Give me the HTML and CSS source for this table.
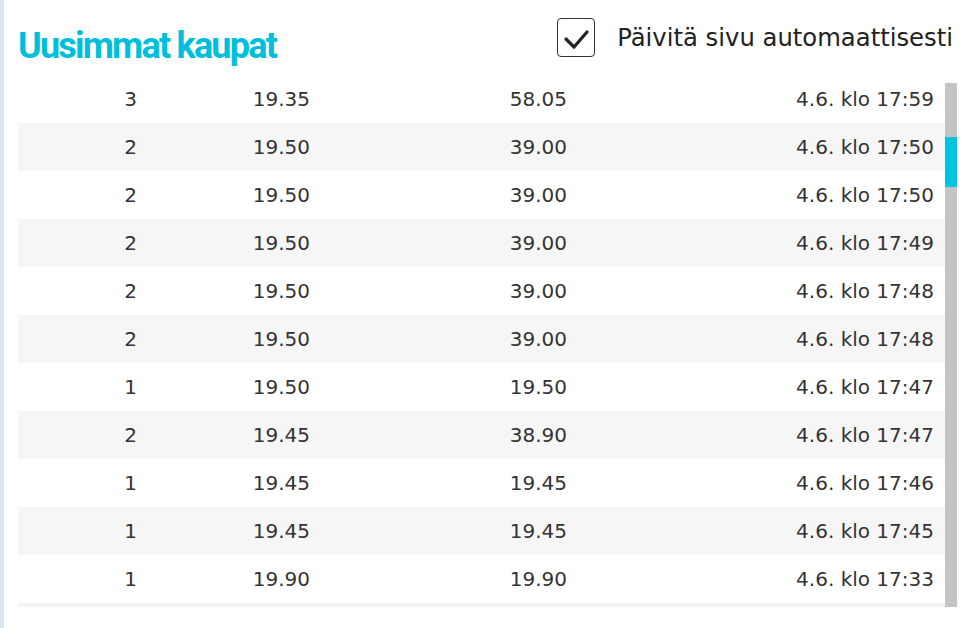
FILE: index.html
```html
<!DOCTYPE html>
<html lang="fi">
<head>
<meta charset="utf-8">
<title>Uusimmat kaupat</title>
<link rel="stylesheet" href="styles.css">
</head>
<body>
<div class="panel">
  <header class="head">
    <h2 class="title">Uusimmat kaupat</h2>
    <label class="auto">
      <span class="box">
        <svg width="38" height="39" viewBox="0 0 38 39"><polyline points="9,21 17,29 30,14" fill="none" stroke="#222" stroke-width="3.2" stroke-linecap="round" stroke-linejoin="round"/></svg>
      </span>
      <span class="auto-text">Päivitä sivu automaattisesti</span>
    </label>
  </header>
  <div class="scroller">
    <div class="rows">
      <div class="row"><span>3</span><span>19.35</span><span>58.05</span><span>4.6. klo 17:59</span></div>
      <div class="row"><span>2</span><span>19.50</span><span>39.00</span><span>4.6. klo 17:50</span></div>
      <div class="row"><span>2</span><span>19.50</span><span>39.00</span><span>4.6. klo 17:50</span></div>
      <div class="row"><span>2</span><span>19.50</span><span>39.00</span><span>4.6. klo 17:49</span></div>
      <div class="row"><span>2</span><span>19.50</span><span>39.00</span><span>4.6. klo 17:48</span></div>
      <div class="row"><span>2</span><span>19.50</span><span>39.00</span><span>4.6. klo 17:48</span></div>
      <div class="row"><span>1</span><span>19.50</span><span>19.50</span><span>4.6. klo 17:47</span></div>
      <div class="row"><span>2</span><span>19.45</span><span>38.90</span><span>4.6. klo 17:47</span></div>
      <div class="row"><span>1</span><span>19.45</span><span>19.45</span><span>4.6. klo 17:46</span></div>
      <div class="row"><span>1</span><span>19.45</span><span>19.45</span><span>4.6. klo 17:45</span></div>
      <div class="row"><span>1</span><span>19.90</span><span>19.90</span><span>4.6. klo 17:33</span></div>
      <div class="row"></div>
    </div>
    <div class="bar"><div class="thumb"></div></div>
  </div>
</div>
</body>
</html>
```
FILE: styles.css
```css
html, body {
  margin: 0;
  padding: 0;
  background: #fff;
}
body {
  width: 971px;
  height: 628px;
  overflow: hidden;
  font-family: "DejaVu Sans", sans-serif;
  color: #333;
}
.panel {
  height: 628px;
  border-left: 4px solid #dce5ee;
  padding: 0 14px 0 14px;
  box-sizing: border-box;
}
.head {
  display: flex;
  justify-content: space-between;
  align-items: flex-start;
  height: 83px;
  margin-right: 4px;
}
.title {
  margin: 26px 0 0 0;
  font-family: Roboto, "DejaVu Sans", sans-serif;
  font-weight: 700;
  font-size: 36px;
  line-height: 40px;
  letter-spacing: -1.8px;
  color: #00bfdc;
}
.auto {
  display: flex;
  align-items: center;
  margin-top: 18px;
  gap: 22px;
}
.box {
  width: 38px;
  height: 39px;
  box-sizing: border-box;
  border: 1.5px solid #333;
  border-radius: 4px;
  display: flex;
  align-items: center;
  justify-content: center;
}
.box svg {
  display: block;
  flex: none;
}
.auto-text {
  font-size: 24.3px;
  line-height: 39px;
  color: #222;
}
.scroller {
  display: flex;
  height: 524px;
  overflow: hidden;
}
.rows {
  flex: 1;
  margin-top: -8px;
}
.row {
  display: grid;
  grid-template-columns: 119px 173px 257px 367px;
  height: 48px;
  align-items: center;
  font-size: 20px;
  color: #333;
}
.row span {
  text-align: right;
}
.row:nth-child(even) {
  background: #f6f6f6;
}
.bar {
  width: 12px;
  flex: none;
  background: #c4c4c4;
}
.thumb {
  margin-top: 54px;
  height: 50px;
  background: #00c3df;
}
```
